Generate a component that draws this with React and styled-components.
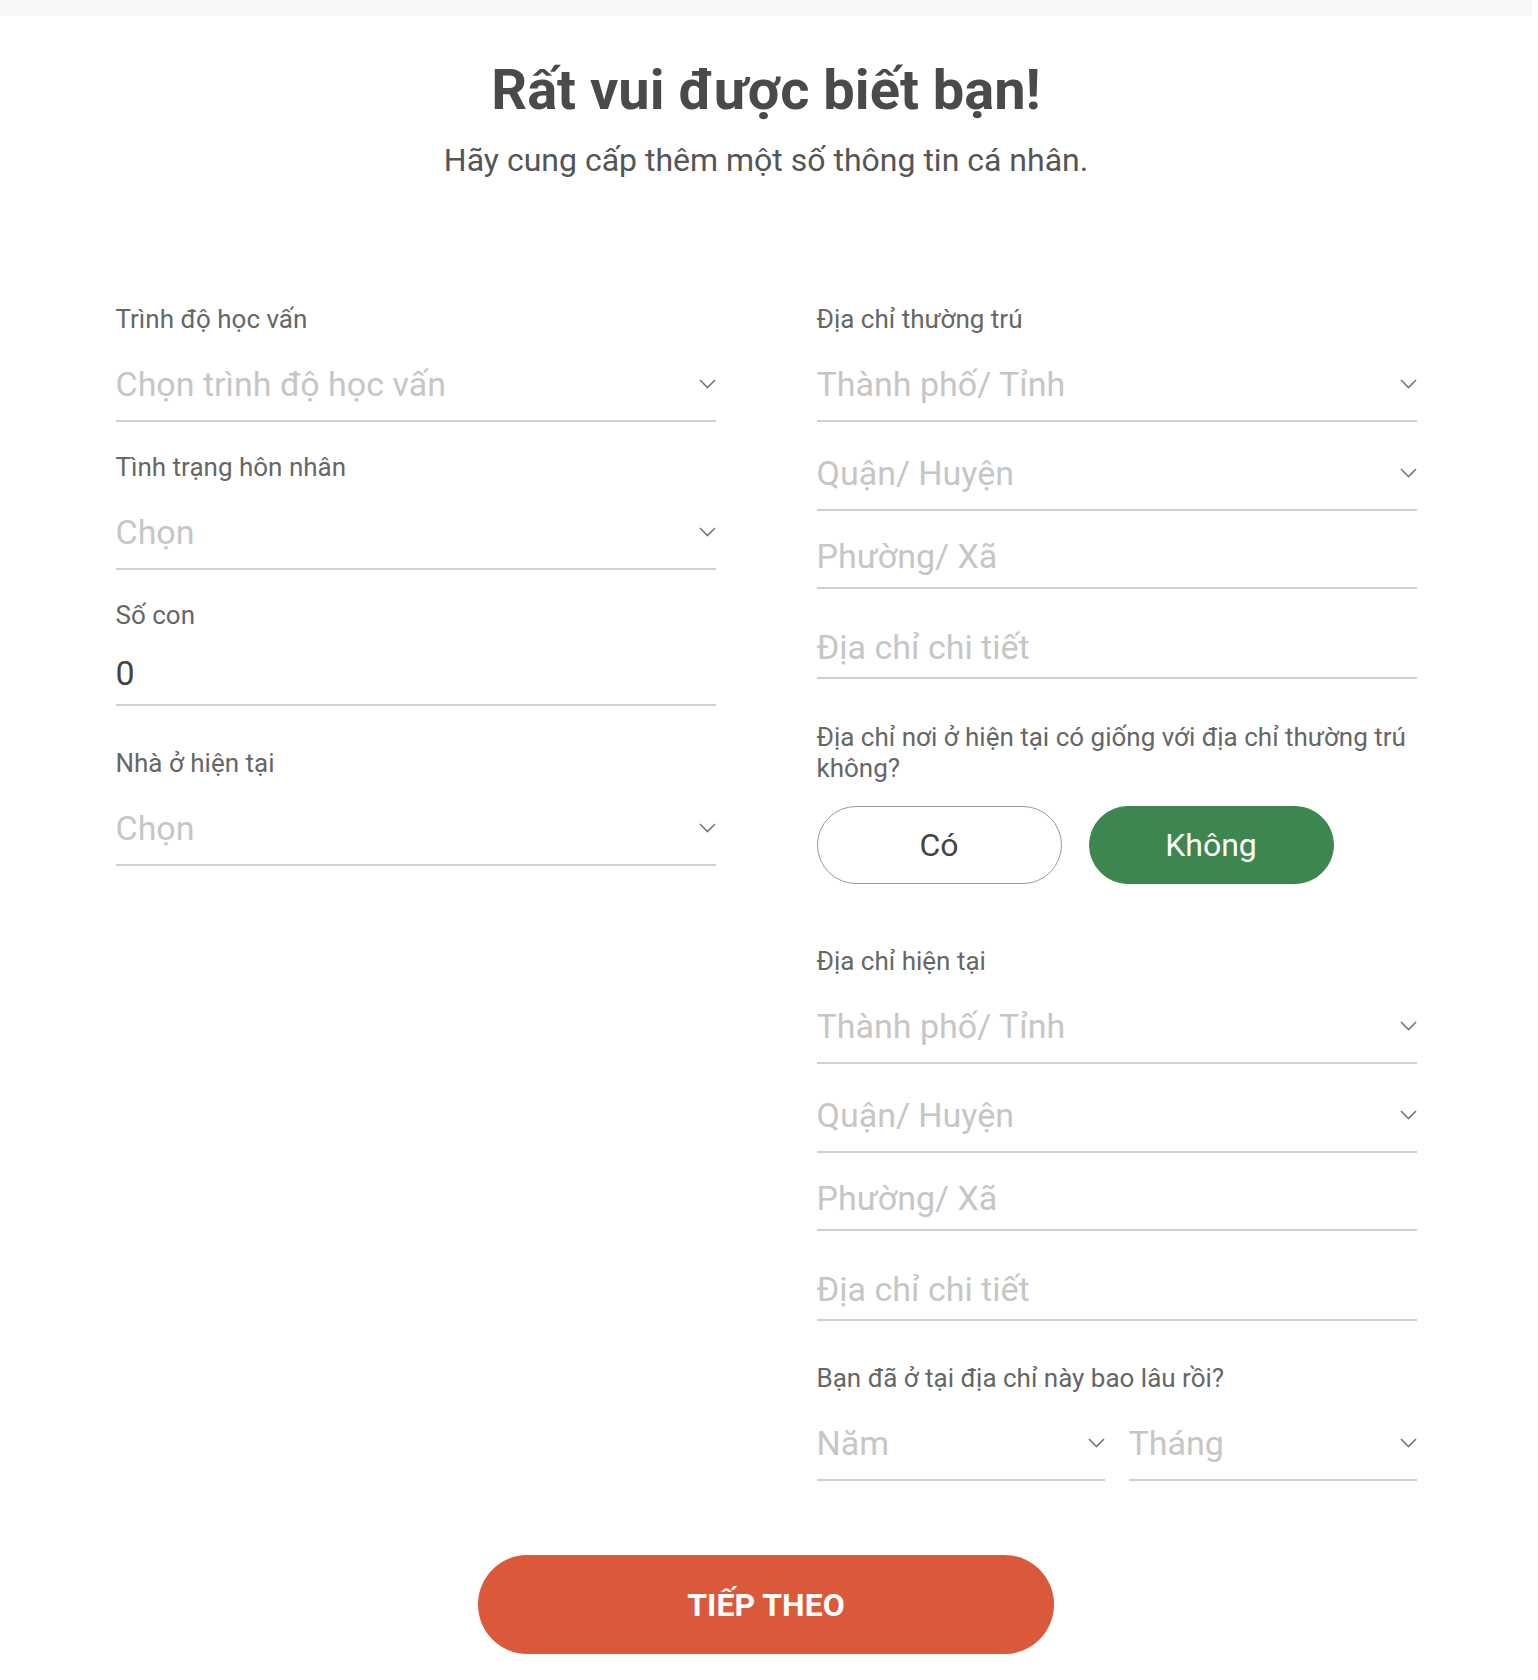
import React from "react";
import styled, { createGlobalStyle } from "styled-components";

const GlobalStyle = createGlobalStyle`
  body {
    margin: 0;
    background: #fff;
    font-family: Roboto, "Noto Sans", Arial, sans-serif;
  }
  * {
    box-sizing: border-box;
  }
`;

const TopBar = styled.div`
  height: 16px;
  background: #f7f7f7;
`;

const Page = styled.div`
  padding-right: 6px;
`;

const Container = styled.div`
  width: 1301px;
  margin: 0 auto;
`;

const Header = styled.header`
  text-align: center;
`;

const Title = styled.h1`
  margin: 42px 0 0;
  font-size: 56px;
  line-height: 64px;
  font-weight: 700;
  color: #4a4a4a;
`;

const Subtitle = styled.p`
  margin: 20px 0 0;
  font-size: 32px;
  line-height: 36px;
  color: #555;
`;

const Columns = styled.div`
  display: grid;
  grid-template-columns: 600px 600px;
  column-gap: 101px;
  align-items: start;
  margin-top: 126px;
`;

const Column = styled.div`
  display: flex;
  flex-direction: column;
  gap: ${({ $gap }) => $gap || 0}px;
`;

const Field = styled.div`
  display: flex;
  flex-direction: column;
  min-height: 119px;
`;

const Label = styled.div`
  margin-top: ${({ $mt }) => $mt || 0}px;
  font-size: 26px;
  line-height: 30px;
  color: #666;
`;

const Question = styled(Label)`
  line-height: 31px;
`;

const Control = styled.div`
  display: flex;
  align-items: center;
  justify-content: space-between;
  margin-top: ${({ $mt }) => ($mt === undefined ? 30 : $mt)}px;
  padding-bottom: ${({ $pb }) => ($pb === undefined ? 16 : $pb)}px;
  border-bottom: 2px solid #d0d0d0;
`;

const Text = styled.span`
  font-size: 34px;
  line-height: 40px;
  color: ${({ $value }) => ($value ? "#444" : "#c6c6c6")};
`;

const Pair = styled.div`
  display: grid;
  grid-template-columns: 1fr 1fr;
  column-gap: 24px;
`;

const Choices = styled.div`
  display: flex;
  gap: 27px;
  margin-top: 22px;
`;

const Choice = styled.button`
  width: 245px;
  height: 78px;
  border-radius: 39px;
  border: 1.5px solid ${({ $active }) => ($active ? "#3e864f" : "#9a9a9a")};
  background: ${({ $active }) => ($active ? "#3e864f" : "#fff")};
  color: ${({ $active }) => ($active ? "#fff" : "#444")};
  font-family: inherit;
  font-size: 32px;
  cursor: pointer;
`;

const Footer = styled.div`
  display: flex;
  justify-content: center;
  margin-top: 74px;
  padding-bottom: 25px;
`;

const NextButton = styled.button`
  width: 576px;
  height: 99px;
  border: none;
  border-radius: 50px;
  background: #da593b;
  color: #fff;
  font-family: inherit;
  font-size: 32px;
  font-weight: 700;
  cursor: pointer;
`;

const Chevron = () => (
  <svg width="17" height="10" viewBox="0 0 17 10">
    <polyline
      points="1,1 8.5,8.5 16,1"
      fill="none"
      stroke="#777"
      strokeWidth="1.6"
    />
  </svg>
);

const Select = ({ text, mt, pb }) => (
  <Control $mt={mt} $pb={pb}>
    <Text>{text}</Text>
    <Chevron />
  </Control>
);

const Input = ({ text, value, mt = 23, pb = 11 }) => (
  <Control $mt={mt} $pb={pb}>
    <Text $value={value}>{text}</Text>
  </Control>
);

const AddressBlock = () => (
  <>
    <Select text="Thành phố/ Tỉnh" />
    <Select text="Quận/ Huyện" mt={31} />
    <Input text="Phường/ Xã" mt={25} />
    <Input text="Địa chỉ chi tiết" mt={38} pb={10} />
  </>
);

const App = () => {
  return (
    <Page>
      <GlobalStyle />
      <TopBar />
      <Container>
        <Header>
          <Title>Rất vui được biết bạn!</Title>
          <Subtitle>Hãy cung cấp thêm một số thông tin cá nhân.</Subtitle>
        </Header>
        <Columns>
          <Column $gap={29}>
            <Field>
              <Label>Trình độ học vấn</Label>
              <Select text="Chọn trình độ học vấn" />
            </Field>
            <Field>
              <Label>Tình trạng hôn nhân</Label>
              <Select text="Chọn" />
            </Field>
            <Field>
              <Label>Số con</Label>
              <Input text="0" value />
            </Field>
            <Field>
              <Label>Nhà ở hiện tại</Label>
              <Select text="Chọn" />
            </Field>
          </Column>
          <Column>
            <Label>Địa chỉ thường trú</Label>
            <AddressBlock />
            <Question $mt={43}>
              Địa chỉ nơi ở hiện tại có giống với địa chỉ thường trú không?
            </Question>
            <Choices>
              <Choice>Có</Choice>
              <Choice $active>Không</Choice>
            </Choices>
            <Label $mt={62}>Địa chỉ hiện tại</Label>
            <AddressBlock />
            <Label $mt={42}>Bạn đã ở tại địa chỉ này bao lâu rồi?</Label>
            <Pair>
              <Select text="Năm" />
              <Select text="Tháng" />
            </Pair>
          </Column>
        </Columns>
        <Footer>
          <NextButton>TIẾP THEO</NextButton>
        </Footer>
      </Container>
    </Page>
  );
};

export default App;
